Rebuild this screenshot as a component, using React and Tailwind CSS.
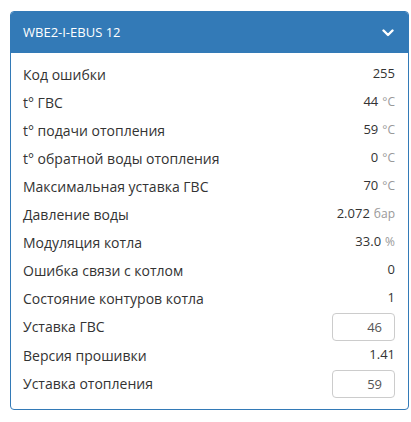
const ROWS = [
  { label: 'Код ошибки', value: '255' },
  { label: 't° ГВС', value: '44', unit: '°C' },
  { label: 't° подачи отопления', value: '59', unit: '°C' },
  { label: 't° обратной воды отопления', value: '0', unit: '°C' },
  { label: 'Максимальная уставка ГВС', value: '70', unit: '°C' },
  { label: 'Давление воды', value: '2.072', unit: 'бар' },
  { label: 'Модуляция котла', value: '33.0', unit: '%' },
  { label: 'Ошибка связи с котлом', value: '0' },
  { label: 'Состояние контуров котла', value: '1' },
  { label: 'Уставка ГВС', value: '46', input: true },
  { label: 'Версия прошивки', value: '1.41' },
  { label: 'Уставка отопления', value: '59', input: true },
]

function Row({ row }) {
  return (
    <div className={'flex items-center justify-between ' + (row.input ? 'h-[29px]' : 'h-[28px]')}>
      <span className="text-[14px] text-[#333]">{row.label}</span>
      {row.input ? (
        <input
          defaultValue={row.value}
          className="h-[28px] w-[63px] rounded-[4px] border border-[#ccc] bg-white px-3 text-right text-[13px] text-[#555] outline-none"
        />
      ) : (
        <span className="text-[13px] text-[#333]">
          {row.value}
          {row.unit && <span className="ml-[4px] text-[12px] text-[#999]">{row.unit}</span>}
        </span>
      )}
    </div>
  )
}

export default function App() {
  return (
    <div className="min-h-[422px] bg-white pt-[11px] font-['Open_Sans',sans-serif]">
      <div className="ml-[10px] w-[399px] rounded-[4px] border border-[#337ab7] bg-white">
        <div className="flex h-[41px] items-center justify-between rounded-t-[3px] bg-[#337ab7] pl-[12px] pr-[14px] text-white">
          <span className="text-[13px]">WBE2-I-EBUS 12</span>
          <svg width="12" height="8" viewBox="0 0 12 8" fill="none" stroke="white" strokeWidth="2.4" strokeLinecap="round" strokeLinejoin="round">
            <path d="M1.5 1.5 6 6l4.5-4.5" />
          </svg>
        </div>
        <div className="pb-[11px] pl-[12px] pr-[13px] pt-[7px]">
          {ROWS.map((row) => (
            <Row key={row.label} row={row} />
          ))}
        </div>
      </div>
    </div>
  )
}
